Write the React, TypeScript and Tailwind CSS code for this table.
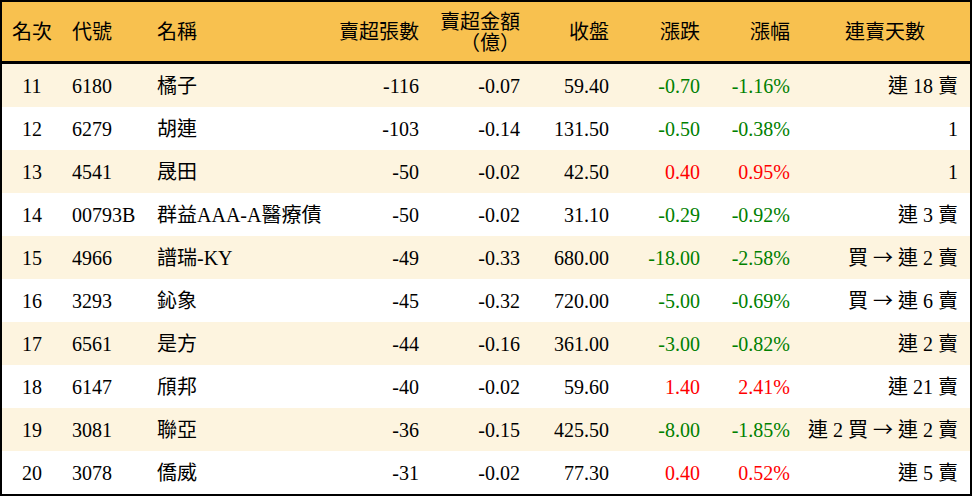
type Row = {
  rank: number;
  code: string;
  name: string;
  lots: string;
  amount: string;
  close: string;
  change: string;
  pct: string;
  streak: string;
};

const ROWS: Row[] = [
  { rank: 11, code: '6180', name: '橘子', lots: '-116', amount: '-0.07', close: '59.40', change: '-0.70', pct: '-1.16%', streak: '連 18 賣' },
  { rank: 12, code: '6279', name: '胡連', lots: '-103', amount: '-0.14', close: '131.50', change: '-0.50', pct: '-0.38%', streak: '1' },
  { rank: 13, code: '4541', name: '晟田', lots: '-50', amount: '-0.02', close: '42.50', change: '0.40', pct: '0.95%', streak: '1' },
  { rank: 14, code: '00793B', name: '群益AAA-A醫療債', lots: '-50', amount: '-0.02', close: '31.10', change: '-0.29', pct: '-0.92%', streak: '連 3 賣' },
  { rank: 15, code: '4966', name: '譜瑞-KY', lots: '-49', amount: '-0.33', close: '680.00', change: '-18.00', pct: '-2.58%', streak: '買 → 連 2 賣' },
  { rank: 16, code: '3293', name: '鈊象', lots: '-45', amount: '-0.32', close: '720.00', change: '-5.00', pct: '-0.69%', streak: '買 → 連 6 賣' },
  { rank: 17, code: '6561', name: '是方', lots: '-44', amount: '-0.16', close: '361.00', change: '-3.00', pct: '-0.82%', streak: '連 2 賣' },
  { rank: 18, code: '6147', name: '頎邦', lots: '-40', amount: '-0.02', close: '59.60', change: '1.40', pct: '2.41%', streak: '連 21 賣' },
  { rank: 19, code: '3081', name: '聯亞', lots: '-36', amount: '-0.15', close: '425.50', change: '-8.00', pct: '-1.85%', streak: '連 2 買 → 連 2 賣' },
  { rank: 20, code: '3078', name: '僑威', lots: '-31', amount: '-0.02', close: '77.30', change: '0.40', pct: '0.52%', streak: '連 5 賣' },
];

// the arrow is drawn wide, as in a CJK font
function Streak({ text }: { text: string }) {
  const parts = text.split('→');
  return (
    <>
      {parts.map((p, i) => (
        <span key={i}>
          {i > 0 && <span className="font-['Noto_Sans_CJK_TC']">→</span>}
          {p}
        </span>
      ))}
    </>
  );
}

export default function App() {
  return (
    <div className="w-[972px] h-[496px] border-2 border-black bg-white">
      <table
        className="w-[968px] table-fixed border-separate border-spacing-0 text-[20px] text-black"
        style={{ fontFamily: '"Liberation Serif", "Noto Sans CJK TC", serif' }}
      >
        <colgroup>
          <col className="w-[60px]" />
          <col className="w-[85px]" />
          <col className="w-[183px]" />
          <col className="w-[99px]" />
          <col className="w-[101px]" />
          <col className="w-[89px]" />
          <col className="w-[91px]" />
          <col className="w-[90px]" />
          <col className="w-[170px]" />
        </colgroup>
        <thead>
          <tr className="bg-[#f8c14f] leading-[21px]">
            <th className="h-[62px] border-b-[3px] border-black pt-[2px] text-center font-normal">名次</th>
            <th className="border-b-[3px] border-black pt-[2px] pl-[10px] text-left font-normal">代號</th>
            <th className="border-b-[3px] border-black pt-[2px] pl-[10px] text-left font-normal">名稱</th>
            <th className="border-b-[3px] border-black pt-[2px] pr-[10px] text-right font-normal">賣超張數</th>
            <th className="border-b-[3px] border-black pt-[2px] pr-[10px] text-right font-normal">
              賣超金額
              <br />
              （億）
            </th>
            <th className="border-b-[3px] border-black pt-[2px] pr-[10px] text-right font-normal">收盤</th>
            <th className="border-b-[3px] border-black pt-[2px] pr-[10px] text-right font-normal">漲跌</th>
            <th className="border-b-[3px] border-black pt-[2px] pr-[10px] text-right font-normal">漲幅</th>
            <th className="border-b-[3px] border-black pt-[2px] text-center font-normal">連賣天數</th>
          </tr>
        </thead>
        <tbody>
          {ROWS.map((r, i) => {
            const up = !r.change.startsWith('-');
            const color = up ? 'text-[#ff0000]' : 'text-[#008000]';
            return (
              <tr key={r.rank} className={i % 2 === 0 ? 'bg-[#fdf4df]' : 'bg-white'}>
                <td className="h-[43px] text-center">{r.rank}</td>
                <td className="pl-[10px]">{r.code}</td>
                <td className="pl-[10px] whitespace-nowrap">{r.name}</td>
                <td className="pr-[10px] text-right">{r.lots}</td>
                <td className="pr-[10px] text-right">{r.amount}</td>
                <td className="pr-[10px] text-right">{r.close}</td>
                <td className={`pr-[10px] text-right ${color}`}>{r.change}</td>
                <td className={`pr-[10px] text-right ${color}`}>{r.pct}</td>
                <td className="pr-[12px] text-right whitespace-nowrap">
                  <Streak text={r.streak} />
                </td>
              </tr>
            );
          })}
        </tbody>
      </table>
    </div>
  );
}
